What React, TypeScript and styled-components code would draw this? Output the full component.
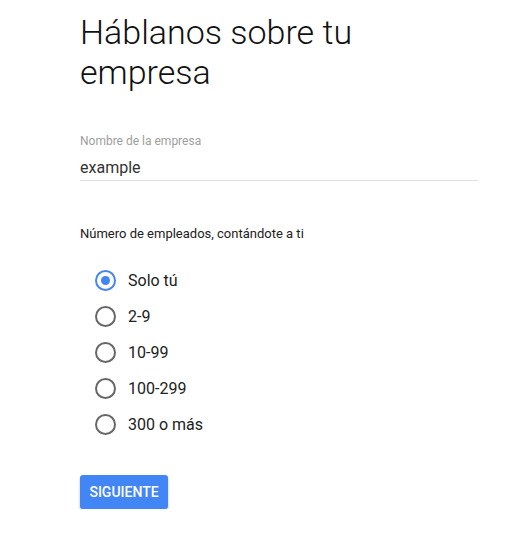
import React, { useState } from "react";
import styled, { createGlobalStyle } from "styled-components";

const Global = createGlobalStyle`
  html, body { margin: 0; padding: 0; background: #ffffff; }
  body { font-family: Roboto, "Noto Sans", sans-serif; color: #212121; }
`;

const Page = styled.div`
  width: 398px;
  padding: 12px 0 0 80px;
  display: flex;
  flex-direction: column;
`;

const Title = styled.h1`
  margin: 0;
  font-size: 34px;
  line-height: 40px;
  font-weight: 300;
  color: #111111;
  width: 300px;
`;

const Field = styled.div`
  margin-top: 41px;
  display: flex;
  flex-direction: column;
  border-bottom: 1px solid #e0e0e0;
  padding-bottom: 1px;
`;

const FieldLabel = styled.label`
  font-size: 12px;
  line-height: 16px;
  color: #9e9e9e;
`;

const FieldInput = styled.input`
  border: none;
  outline: none;
  padding: 0;
  margin-top: 6px;
  height: 24px;
  font-family: Roboto, sans-serif;
  font-size: 16px;
  color: #333333;
  background: transparent;
`;

const Question = styled.div`
  margin-top: 44px;
  font-size: 13px;
  line-height: 18px;
  color: #212121;
`;

const Options = styled.div`
  margin-top: 19px;
  display: flex;
  flex-direction: column;
  padding-left: 15px;
`;

const Option = styled.label`
  display: flex;
  align-items: center;
  height: 36px;
  gap: 12px;
  cursor: pointer;
  font-size: 16px;
  color: #212121;
`;

const Radio = styled.span<{ $checked: boolean }>`
  box-sizing: border-box;
  width: 21px;
  height: 21px;
  border-radius: 50%;
  border: 2px solid ${(p) => (p.$checked ? "#4285f4" : "#666666")};
  display: flex;
  align-items: center;
  justify-content: center;
  &::after {
    content: "";
    width: 9px;
    height: 9px;
    border-radius: 50%;
    background: #4285f4;
    display: ${(p) => (p.$checked ? "block" : "none")};
  }
`;

const Button = styled.button`
  margin-top: 33px;
  align-self: flex-start;
  width: 88px;
  height: 34px;
  border: none;
  border-radius: 3px;
  background: #4285f4;
  color: #ffffff;
  font-family: Roboto, sans-serif;
  font-weight: 500;
  font-size: 14px;
  letter-spacing: 0;
  box-shadow: 0 2px 3px rgba(0, 0, 0, 0.25);
  padding: 0;
`;

const options = ["Solo tú", "2-9", "10-99", "100-299", "300 o más"];

export default function App() {
  const [sel, setSel] = useState(0);
  return (
    <>
      <Global />
      <Page>
        <Title>Háblanos sobre tu empresa</Title>
        <Field>
          <FieldLabel>Nombre de la empresa</FieldLabel>
          <FieldInput defaultValue="example" />
        </Field>
        <Question>Número de empleados, contándote a ti</Question>
        <Options>
          {options.map((o, i) => (
            <Option key={o} onClick={() => setSel(i)}>
              <Radio $checked={sel === i} />
              {o}
            </Option>
          ))}
        </Options>
        <Button>SIGUIENTE</Button>
      </Page>
    </>
  );
}
